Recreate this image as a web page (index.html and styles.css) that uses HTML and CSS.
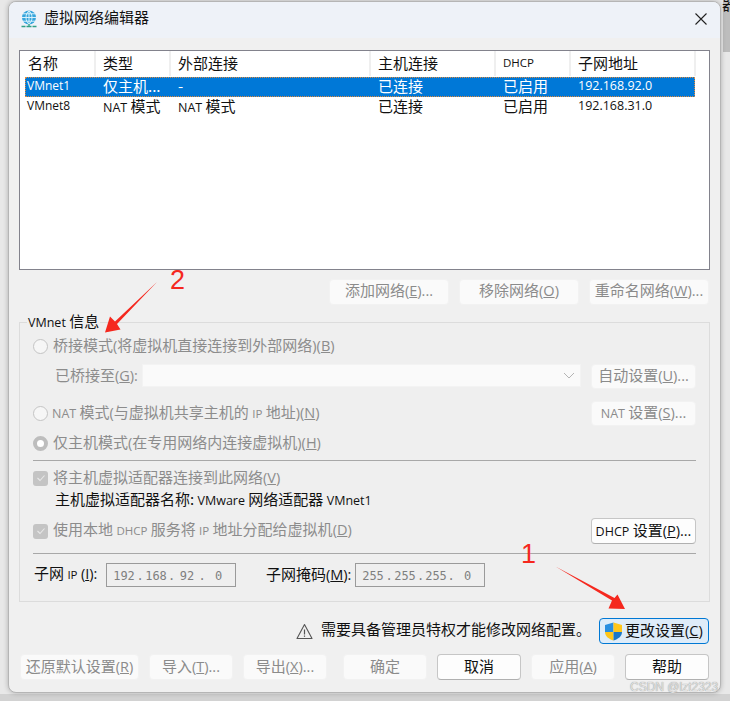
FILE: index.html
```html
<!DOCTYPE html>
<html lang="zh-CN">
<head>
<meta charset="utf-8">
<title>虚拟网络编辑器</title>
<link rel="stylesheet" href="styles.css">
</head>
<body>
<span class="behind">器</span>
<div class="window">
  <header class="titlebar">
    <svg class="app-icon" width="18" height="18" viewBox="0 0 18 18">
      <circle cx="9" cy="7.5" r="7" fill="#35a5dc"/>
      <path d="M9 .8v13.4M2 7.5h14M3 3.8h12M3 11.2h12M9 .8C5 4 5 11 9 14.2M9 .8c4 3.2 4 10.2 0 13.4" fill="none" stroke="#d9f1fb" stroke-width="1"/>
      <path d="M8.3 14h1.4v2H8.300z" fill="#3ba58c"/>
      <path d="M1.500 16.500h4M6.500 16.500h5M12.500 16.500h4" stroke="#2f9f86" stroke-width="1.500"/>
    </svg>
    <span class="title">虚拟网络编辑器</span>
    <svg class="close" width="12" height="12" viewBox="0 0 12 12"><path d="M.5.5l11 11M11.500.5l-11 11" stroke="#222" stroke-width="1.100" fill="none"/></svg>
  </header>

  <div class="body">
    <div class="list">
      <div class="list-row list-head">
        <span class="cell">名称</span><span class="cell">类型</span><span class="cell">外部连接</span><span class="cell">主机连接</span><span class="cell latin-s">DHCP</span><span class="cell">子网地址</span>
      </div>
      <div class="list-row selected">
        <span class="cell latin">VMnet1</span><span class="cell">仅主机...</span><span class="cell">-</span><span class="cell">已连接</span><span class="cell">已启用</span><span class="cell latin">192.168.92.0</span>
      </div>
      <div class="list-row">
        <span class="cell latin">VMnet8</span><span class="cell"><span class="latin">NAT</span> 模式</span><span class="cell"><span class="latin">NAT</span> 模式</span><span class="cell">已连接</span><span class="cell">已启用</span><span class="cell latin">192.168.31.0</span>
      </div>
    </div>

    <div class="list-actions">
      <button class="btn btn-list" disabled><span>添加网络<span class="mn">(<u>E</u>)...</span></span></button>
      <button class="btn btn-list" disabled><span>移除网络<span class="mn">(<u>O</u>)</span></span></button>
      <button class="btn btn-list" disabled><span>重命名网络<span class="mn">(<u>W</u>)...</span></span></button>
    </div>

    <fieldset class="group">
      <legend class="legend"><span class="latin">VMnet</span> 信息</legend>

      <div class="row row-first">
        <span class="radio"></span><span class="label off">桥接模式<span class="mn">(</span>将虚拟机直接连接到外部网络<span class="mn">)(<u>B</u>)</span></span>
      </div>
      <div class="row row-bridge">
        <span class="label off sub-label bridge-label">已桥接至<span class="mn">(<u>G</u>):</span></span>
        <div class="select"><svg width="12" height="7" viewBox="0 0 12 7"><path d="M1 1l5 5 5-5" fill="none" stroke="#b4b4b4"/></svg></div>
        <button class="btn btn-side" disabled><span>自动设置<span class="mn">(<u>U</u>)...</span></span></button>
      </div>
      <div class="row row-nat">
        <span class="radio"></span><span class="label off label-tight"><span class="latin">NAT</span> 模式<span class="mn">(</span>与虚拟机共享主机的 <span class="latin-s">IP</span> 地址<span class="mn">)(<u>N</u>)</span></span>
        <button class="btn btn-side push" disabled><span><span class="latin">NAT</span> 设置<span class="mn">(<u>S</u>)...</span></span></button>
      </div>
      <div class="row row-host">
        <span class="radio checked"></span><span class="label off">仅主机模式<span class="mn">(</span>在专用网络内连接虚拟机<span class="mn">)(<u>H</u>)</span></span>
      </div>
      <hr class="sep sep-a">
      <div class="row row-check1">
        <span class="check"><svg width="10" height="8" viewBox="0 0 10 8"><path d="M1.500 4l2.500 2.500 4.500-5" fill="none" stroke="#e8e8e8" stroke-width="1.100"/></svg></span><span class="label off">将主机虚拟适配器连接到此网络<span class="mn">(<u>V</u>)</span></span>
      </div>
      <div class="row row-adapter">
        <span class="label sub-label">主机虚拟适配器名称: <span class="latin">VMware</span> 网络适配器 <span class="latin">VMnet1</span></span>
      </div>
      <div class="row row-dhcp">
        <span class="check"><svg width="10" height="8" viewBox="0 0 10 8"><path d="M1.500 4l2.500 2.500 4.500-5" fill="none" stroke="#e8e8e8" stroke-width="1.100"/></svg></span><span class="label off">使用本地 <span class="latin-s">DHCP</span> 服务将 <span class="latin-s">IP</span> 地址分配给虚拟机<span class="mn">(<u>D</u>)</span></span>
        <button class="btn btn-side btn-on push"><span><span class="latin">DHCP</span> 设置<span class="mn">(<u>P</u>)...</span></span></button>
      </div>
      <hr class="sep sep-b">
      <div class="row row-subnet">
        <span class="label field-label ip-label">子网 <span class="latin-s">IP</span> <span class="mn">(<u>I</u>):</span></span>
        <div class="ip"><span>192</span><span>.</span><span>168</span><span>.</span><span>92</span><span>.</span><span>0</span></div>
        <span class="label field-label mask-label">子网掩码<span class="mn">(<u>M</u>):</span></span>
        <div class="ip"><span>255</span><span>.</span><span>255</span><span>.</span><span>255</span><span>.</span><span>0</span></div>
      </div>
    </fieldset>

    <div class="notice">
      <svg class="warn" width="17" height="17" viewBox="0 0 17 17"><path d="M8.500 1.500L16 15.500H1z" fill="none" stroke="#555" stroke-width="1.100" stroke-linejoin="round"/><path d="M8.500 6.500v5" stroke="#555" stroke-width="1.200"/><path d="M8.500 12.500v1.300" stroke="#555" stroke-width="1.200"/></svg>
      <span class="label notice-text">需要具备管理员特权才能修改网络配置。</span>
      <button class="btn btn-change">
        <svg class="shield" width="19" height="19" viewBox="0 0 19 19"><path d="M9.500.5L1 3v7h8.500z" fill="#2a8fe0"/><path d="M9.500.5L18 3v7H9.500z" fill="#ffc61a"/><path d="M1 10h8.500v8.500C5 17 1 14.500 1 10z" fill="#ffc61a"/><path d="M9.500 10H18c0 4.500-4 7-8.500 8.500z" fill="#1b78c8"/></svg>
        <span>更改设置<span class="mn">(<u>C</u>)</span></span>
      </button>
    </div>

    <div class="footer">
      <button class="btn btn-wide" disabled><span>还原默认设置<span class="mn">(<u>R</u>)</span></span></button>
      <button class="btn btn-foot" disabled><span>导入<span class="mn">(<u>T</u>)...</span></span></button>
      <button class="btn btn-foot" disabled><span>导出<span class="mn">(<u>X</u>)...</span></span></button>
      <button class="btn btn-foot gap-left" disabled>确定</button>
      <button class="btn btn-foot btn-on">取消</button>
      <button class="btn btn-foot" disabled><span>应用<span class="mn">(<u>A</u>)</span></span></button>
      <button class="btn btn-foot btn-on">帮助</button>
    </div>
  </div>
</div>

<svg class="marks" width="730" height="701" viewBox="0 0 730 701">
  <path d="M157 282L115 321.500 110 316.500 105 332.500 120.500 329.500 117 324z" fill="#f5281e"/>
  <path d="M555.500 566.500L612 600.500 608.500 608.500 625 609 617.500 594.500 614.500 598z" fill="#f5281e"/>
</svg>
<span class="num num-2">2</span>
<span class="num num-1">1</span>
<span class="watermark">CSDN @lzt2323</span>
</body>
</html>
```

FILE: styles.css
```css
* { box-sizing: border-box; }
html, body { margin: 0; height: 701px; overflow: hidden; }
body {
  position: relative;
  padding: 1px 9px 8px 8px;
  background:
    linear-gradient(#bdbdbd, #bdbdbd) right top / 7px 52px no-repeat,
    linear-gradient(#d2d2d2, #d2d2d2) left bottom / 100% 7px no-repeat,
    #e8e8e8;
  font-family: "Noto Sans CJK SC", "Liberation Sans", sans-serif;
  font-size: 15px;
  color: #111;
}
.behind { position: absolute; left: 722px; top: -5px; font-size: 15px; line-height: 18px; }
.latin { font-family: "Open Sans", "Noto Sans CJK SC", sans-serif; font-size: 12.500px; }
.latin-s { font-family: "Open Sans", "Noto Sans CJK SC", sans-serif; font-size: 11.500px; }
.mn { font-family: "Open Sans", "Noto Sans CJK SC", sans-serif; font-size: 14.500px; }

.window {
  height: 692px;
  display: flex;
  flex-direction: column;
  background: #f0f0f0;
  border: 1px solid #b5b5b5;
  border-radius: 8px;
  box-shadow: 0 0 5px rgba(0,0,0,.25);
  overflow: hidden;
}
.titlebar {
  height: 36px;
  flex: none;
  display: flex;
  align-items: center;
  padding: 0 13px 0 11px;
  background: #eef2f8;
}
.app-icon { margin-bottom: 3px; }
.title { margin-left: 6px; font-size: 15px; line-height: 20px; margin-bottom: 7px; }
.close { margin-left: auto; margin-bottom: 2px; }

.body { flex: 1; padding: 12px 10px 0 10px; }

.list {
  height: 220px;
  background: #fff;
  border: 1px solid #82828c;
  padding-left: 5px;
}
.list-row {
  display: grid;
  grid-template-columns: 70px 75px 200px 125px 75px 125px;
  width: 670px;
  height: 20px;
  align-items: start;
}
.list-head { height: 25.500px; }
.list-head .cell { height: 25px; line-height: 24px; border-right: 1px solid #efefef; box-shadow: 1px 0 0 #efefef; }
.cell { height: 20px; line-height: 18px; padding-left: 8px; white-space: nowrap; }
.list-row .cell:first-child { padding-left: 2px; }
.list-head .cell:first-child { padding-left: 3px; }
.list-row .cell.latin:first-child { font-size: 12px; }
.selected { background: #0078d7; color: #fff; outline: 1px dotted #e08a3c; outline-offset: -1px; }

.btn {
  font: inherit;
  padding: 0 0 4px;
  color: #111;
  background: #fdfdfd;
  border: 1px solid #d0d0d0;
  border-radius: 4px;
  display: inline-flex;
  align-items: center;
  justify-content: center;
  white-space: nowrap;
}
.btn:disabled { color: #8b8b8b; background: #fafafa; border-color: #f2f2f2; }
.btn-on { border-color: #c6c6c6; border-bottom-color: #b0b0b0; }

.list-actions {
  display: flex;
  justify-content: flex-end;
  gap: 10px;
  margin-top: 8.500px;
  padding-right: 1px;
}
.btn-list { width: 120px; height: 26px; }

.group {
  margin: 8.500px 0 0;
  padding: 0 13px;
  height: 288.500px;
  border: 1px solid #dcdcdc;
  background: #efefef;
  min-inline-size: 0;
}
.legend { padding: 0 1px; margin-left: -6px; height: 18px; line-height: 15px; color: #111; }

.row { display: flex; align-items: center; }
.push { margin-left: auto; }
.row-first { height: 20px; margin-top: 5px; }
.row-bridge { height: 26px; margin-top: 7px; }
.row-nat { height: 26px; margin-top: 11.500px; }
.row-host { height: 20px; margin-top: 6.500px; }
.row-check1 { height: 20px; margin-top: 7px; }
.row-adapter { height: 20px; margin-top: 3px; }
.row-dhcp { height: 26px; margin-top: 7px; }
.row-subnet { height: 24px; margin-top: 9px; }

.label { white-space: nowrap; line-height: 20px; padding-bottom: 2px; }
.off { color: #8c8c8c; }
.radio {
  flex: none;
  width: 15px;
  height: 15px;
  margin-right: 5px;
  border-radius: 50%;
  border: 1px solid #c4c4c4;
  background: #f6f6f6;
}
.radio.checked { background: #fff; border: 4px solid #bdbdbd; }
.label-tight { margin-left: -1px; }
.sub-label { margin-left: 22px; }
.bridge-label { width: 87px; flex: none; }
.select {
  width: 439px;
  height: 23px;
  flex: none;
  display: flex;
  align-items: center;
  justify-content: flex-end;
  background: #fafafa;
  border: 1px solid #f3f3f3;
  margin-top: -2px;
}
.select svg { margin-right: 5px; }
.btn-side { width: 105px; height: 25px; }
.row-bridge .btn-side { margin-left: 10px; margin-top: 1px; }
.row-dhcp .btn-side { height: 26px; }
.check {
  flex: none;
  width: 15px;
  height: 15px;
  margin-right: 5px;
  border-radius: 3px;
  background: #c4c4c4;
  display: flex;
  align-items: center;
  justify-content: center;
}
.sep { margin: 0; border: 0; height: 1px; background: #a8a8a8; }
.sep-a { margin-top: 7px; }
.sep-b { margin-top: 9px; }
.field-label { flex: none; }
.ip-label { margin-left: 1px; width: 72px; }
.mask-label { margin-left: 30px; width: 89px; }
.ip {
  flex: none;
  width: 130px;
  height: 24px;
  border: 1px solid #9a9a9a;
  display: grid;
  grid-template-columns: 22px 10px 22px 9px 22px 8px 25px;
  align-items: center;
  justify-items: center;
  padding: 1px 0 0 6px;
  font-family: "DejaVu Sans Mono", monospace;
  font-size: 12px;
  color: #7f7f7f;
}

.notice {
  display: flex;
  align-items: center;
  justify-content: flex-end;
  margin-top: 16.500px;
  height: 26px;
  padding-right: 1px;
}
.warn { margin-right: 8px; margin-top: 1px; }
.notice-text { color: #111; padding-bottom: 4px; }
.btn-change {
  margin-left: 8px;
  width: 110px;
  height: 26px;
  background: #deecf9;
  border-color: #0078d4;
  gap: 2px;
  padding: 0 0 0 4px;
  justify-content: flex-start;
}
.btn-change > span { padding-bottom: 4px; }
.shield { flex: none; }
.footer { display: flex; gap: 10px; margin-top: 10px; padding: 0 1px; }
.btn-foot { width: 84px; height: 26px; }
.btn-wide { width: 119px; height: 26px; }
.gap-left { margin-left: 6px; }

.marks { position: absolute; left: 0; top: 0; pointer-events: none; }
.num { position: absolute; color: #f5281e; font-family: "Liberation Sans", sans-serif; font-size: 27px; line-height: 30px; }
.num-2 { left: 170px; top: 265px; }
.num-1 { left: 521px; top: 539px; }
.watermark {
  position: absolute;
  left: 630px;
  top: 680px;
  font-family: "Liberation Sans", sans-serif;
  font-size: 12px;
  line-height: 15px;
  color: #e2e2e2;
  text-shadow: 0 0 1px #777;
  white-space: nowrap;
}
```
